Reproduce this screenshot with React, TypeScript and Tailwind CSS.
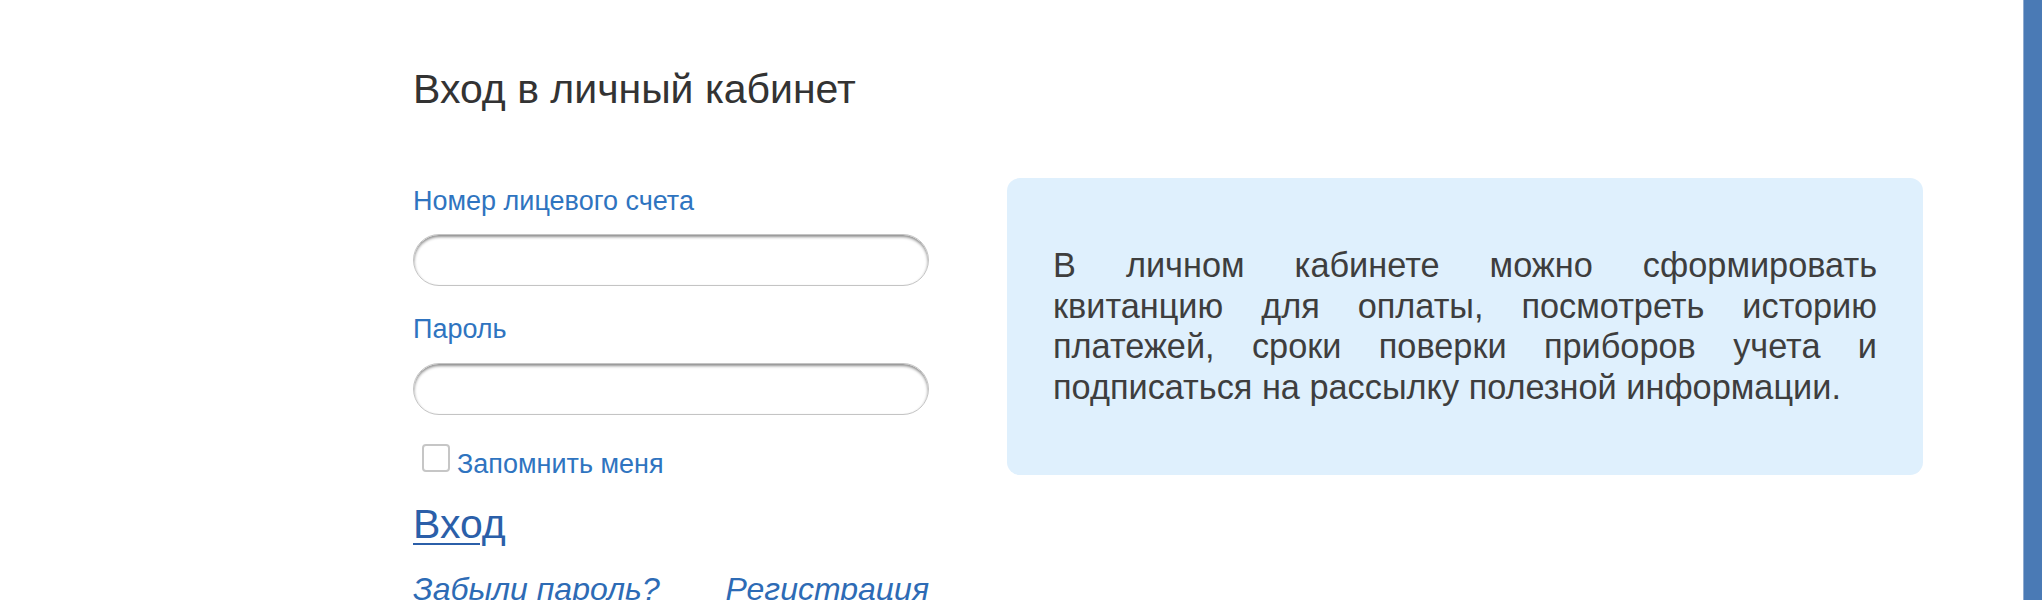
import React from "react";

export default function App() {
  return (
    <div className="flex h-[600px] w-full overflow-hidden bg-white font-['Liberation_Sans',Arial,sans-serif]">
      <div className="flex-1 pl-[413px] pt-[66px]">
        <h1 className="text-[41px] leading-[46px] font-normal text-[#333333]">
          Вход в личный кабинет
        </h1>
        <div className="mt-[66px] flex items-start">
          <div className="flex w-[516px] flex-col">
            <label className="mt-[7px] text-[27px] leading-[32px] text-[#2f74c0]">
              Номер лицевого счета
            </label>
            <input
              type="text"
              className="mt-[17px] h-[52px] w-full rounded-full border border-[#c4c4c4] bg-white shadow-[inset_0_2px_3px_rgba(0,0,0,0.45)] outline-none"
            />
            <label className="mt-[27px] text-[27px] leading-[32px] text-[#2f74c0]">
              Пароль
            </label>
            <input
              type="password"
              className="mt-[18px] h-[52px] w-full rounded-full border border-[#c4c4c4] bg-white shadow-[inset_0_2px_3px_rgba(0,0,0,0.45)] outline-none"
            />
            <div className="mt-[29px] flex items-start">
              <span className="ml-[9px] h-[28px] w-[28px] rounded-[4px] border-2 border-[#c6c6c6] bg-white" />
              <span className="ml-[7px] mt-[4px] text-[27px] leading-[32px] text-[#2f74c0]">
                Запомнить меня
              </span>
            </div>
            <a className="mt-[22px] self-start text-[41px] leading-[44px] text-[#2b5fa9] underline underline-offset-[5px] decoration-[2px]">
              Вход
            </a>
            <div className="mt-[25px] flex justify-between text-[32px] leading-[37px] italic text-[#2d6bb5]">
              <span>Забыли пароль?</span>
              <span>Регистрация</span>
            </div>
          </div>
          <div className="ml-[78px] h-[297px] w-[916px] rounded-[13px] bg-[#dff0fd] px-[46px] pt-[67px]">
            <p className="text-justify text-[34.3px] leading-[40.5px] text-[#3e3e3e]">
              В личном кабинете можно сформировать квитанцию для оплаты, посмотреть историю платежей, сроки поверки приборов учета и подписаться на рассылку полезной информации.
            </p>
          </div>
        </div>
      </div>
      <div className="h-full w-[19px] shrink-0 border-l border-[#8fabd0] bg-[#4a7ab5]" />
    </div>
  );
}
